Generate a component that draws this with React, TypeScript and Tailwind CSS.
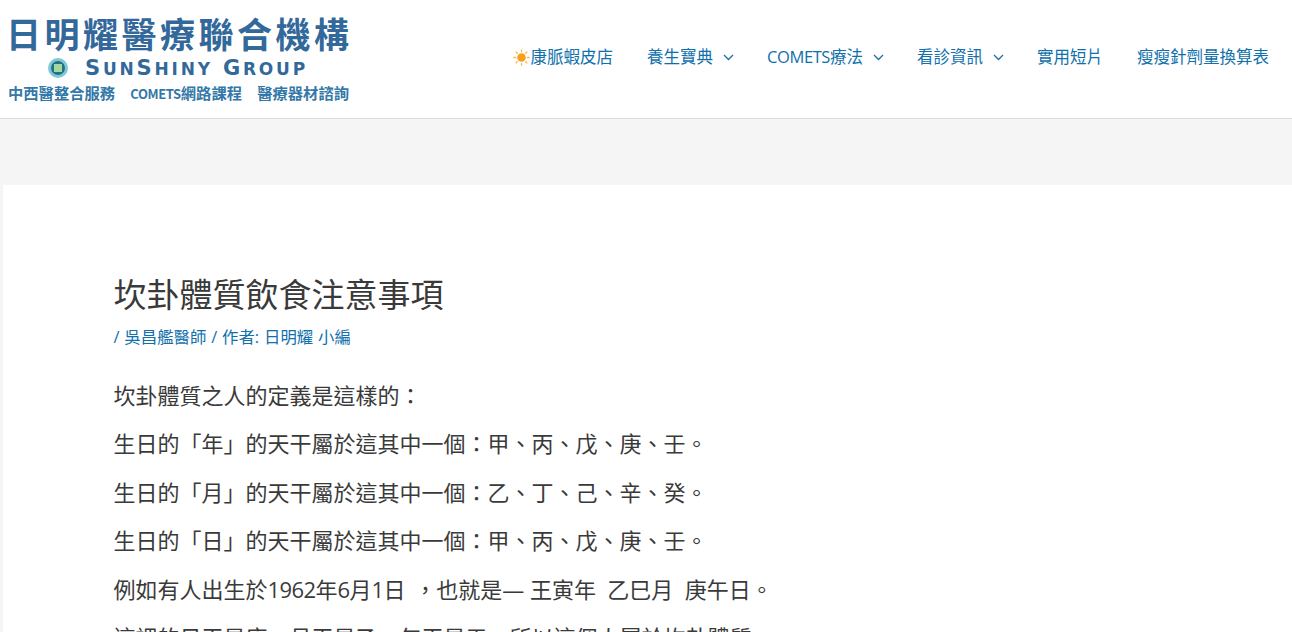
const cjk = 'font-["Open_Sans","Noto_Sans_CJK_TC",sans-serif]'

function SunIcon() {
  return (
    <svg className="w-[17px] h-[17px] shrink-0 mr-[1px]" viewBox="0 0 20 20">
      <circle cx="10" cy="10" r="5" fill="#f7a01e" />
      <g stroke="#f9b54a" strokeWidth="1.5" strokeLinecap="round">
        <path d="M10 1v2.2M10 16.8V19M1 10h2.2M16.8 10H19M3.6 3.6l1.6 1.6M14.8 14.8l1.6 1.6M3.6 16.4l1.6-1.6M14.8 5.2l1.6-1.6" />
      </g>
    </svg>
  )
}

function Chevron() {
  return (
    <svg className="w-[11px] h-[7px] ml-[10px] mr-[-1px]" viewBox="0 0 11 7" fill="none" stroke="#1f6f9f" strokeWidth="1.3">
      <path d="M1 1l4.5 4.5L10 1" />
    </svg>
  )
}

function NavItem({ children, hasMenu }: { children: React.ReactNode; hasMenu?: boolean }) {
  return (
    <a className="flex items-center px-[17px] text-[16.5px] text-[#0f70ab] whitespace-nowrap">
      {children}
      {hasMenu && <Chevron />}
    </a>
  )
}

function Logo() {
  return (
    <div className="self-start pt-[15px] w-[343px] ml-[6px] flex flex-col font-['Noto_Sans_CJK_TC',sans-serif]">
      <div className="flex justify-between text-[35px] leading-[36px] font-bold text-[#33689b]">
        {'日明耀醫療聯合機構'.split('').map((c, i) => (
          <span key={i}>{c}</span>
        ))}
      </div>
      <div className="flex items-center h-[24px] mt-[5px] pl-[42px]">
        <span className="w-[20px] h-[20px] rounded-full bg-[#27707f] border-[3px] border-[#7fc8d8] flex items-center justify-center">
          <span className="w-[8px] h-[8px] bg-[#9fd8a0]" />
        </span>
        <span className="ml-[17px] font-['DejaVu_Sans',sans-serif] text-[21px] leading-[24px] tracking-[2.8px] font-bold text-[#33689b] whitespace-nowrap">
          S<span className="text-[17px]">UN</span>S<span className="text-[17px]">HINY</span> G<span className="text-[17px]">ROUP</span>
        </span>
      </div>
      <div className="flex justify-between mt-[2px] pl-[2px] text-[15.3px] leading-[20px] font-bold text-[#3478a8] whitespace-nowrap">
        <span>中西醫整合服務</span>
        <span><span className="text-[13px] tracking-[-0.4px]">COMETS</span>網路課程</span>
        <span>醫療器材諮詢</span>
      </div>
    </div>
  )
}

const lines = [
  '坎卦體質之人的定義是這樣的：',
  '生日的「年」的天干屬於這其中一個：甲、丙、戊、庚、壬。',
  '生日的「月」的天干屬於這其中一個：乙、丁、己、辛、癸。',
  '生日的「日」的天干屬於這其中一個：甲、丙、戊、庚、壬。',
]

export default function App() {
  return (
    <div className={`h-screen overflow-hidden bg-[#f5f5f5] ${cjk}`}>
      {/* Header */}
      <header className="h-[119px] bg-white border-b border-[#dcdcdc] flex items-center justify-between pr-[6px]">
        <Logo />
        <nav className="flex items-center mt-[-4px]">
          <NavItem><SunIcon />康脈蝦皮店</NavItem>
          <NavItem hasMenu>養生寶典</NavItem>
          <NavItem hasMenu><span className="tracking-[-0.4px]">COMETS</span>療法</NavItem>
          <NavItem hasMenu>看診資訊</NavItem>
          <NavItem>實用短片</NavItem>
          <NavItem>瘦瘦針劑量換算表</NavItem>
        </nav>
      </header>

      {/* Article */}
      <main className="mt-[66px] ml-[3px] bg-white pl-[110.5px] pt-[85px] h-[600px]">
        <h1 className="text-[33px] leading-[50px] text-[#3a3a3a]">坎卦體質飲食注意事項</h1>
        <p className="mt-[4px] text-[16.4px] leading-[26px] text-[#0f70ab] whitespace-pre [word-spacing:0.6px]">
          / 吳昌艦醫師 / 作者: 日明耀 小編
        </p>
        <div className="mt-[21px] text-[22px] leading-[48.4px] text-[#3a3a3a]">
          {lines.map((line) => (
            <p key={line}>{line}</p>
          ))}
          <p>
            例如有人出生於<span className="tracking-[-0.6px]">1962</span>年<span className="tracking-[-0.6px]">6</span>月<span className="tracking-[-0.6px]">1</span>日<span className="ml-[3px]"> ，</span>也就是— 王寅年{'\u00a0 '}乙巳月{'\u00a0 '}庚午日。
          </p>
          <p>這裡的日干是庚，月干是乙，年干是壬，所以這個人屬於坎卦體質。</p>
        </div>
      </main>
    </div>
  )
}
